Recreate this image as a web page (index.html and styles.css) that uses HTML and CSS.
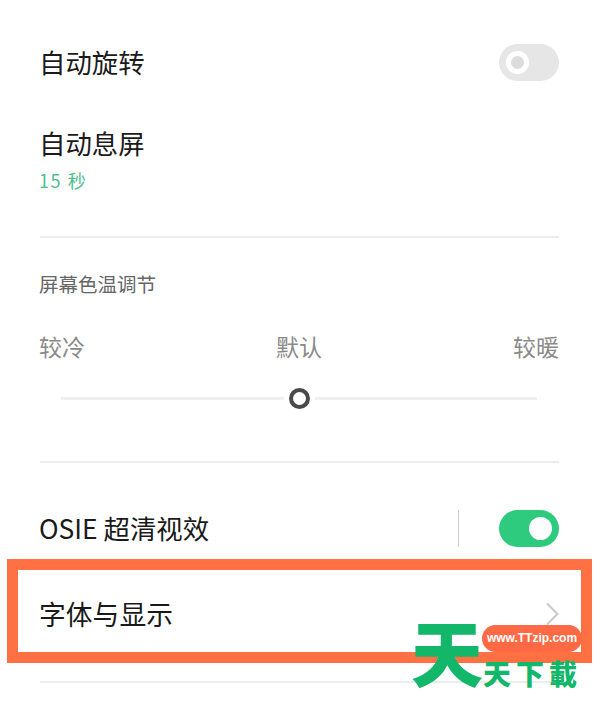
FILE: index.html
```html
<!DOCTYPE html>
<html>
<head>
    <title>字体与显示</title>
    <link rel="stylesheet" href="styles.css">
</head>
<body>
    <div class="page">
        <div class="row row-rotate">
            <span class="row-label">自动旋转</span>
            <span class="switch switch-off"><span class="knob"></span></span>
        </div>

        <div class="row-sleep">
            <div class="row-label">自动息屏</div>
            <div class="row-value">15 秒</div>
        </div>

        <hr class="divider">

        <div class="section-title">屏幕色温调节</div>
        <div class="temp-labels">
            <span>较冷</span>
            <span>默认</span>
            <span>较暖</span>
        </div>
        <div class="slider">
            <span class="slider-thumb"></span>
        </div>

        <hr class="divider">

        <div class="row row-osie">
            <span class="row-label">OSIE 超清视效</span>
            <div class="row-end">
                <span class="row-sep"></span>
                <span class="switch switch-on"><span class="knob"></span></span>
            </div>
        </div>

        <div class="row row-font">
            <span class="row-label row-label-wide">字体与显示</span>
            <svg class="chevron" width="14" height="24" viewBox="0 0 14 24">
                <path d="M2 1.5 L12.5 12 L2 22.5" fill="none" stroke="#c9c9c9" stroke-width="2"/>
            </svg>
        </div>

        <hr class="divider">
    </div>

    <div class="highlight"></div>

    <div class="watermark">
        <span class="wm-big">天</span>
        <span class="wm-url">www.TTzip.com</span>
        <div class="wm-name">
            <span>天</span>
            <span>下</span>
            <span>載</span>
        </div>
    </div>
</body>
</html>
```

FILE: styles.css
```css
html, body {
    margin: 0;
    height: 710px;
    overflow: hidden;
    background-color: #fff;
}

body {
    position: relative;
    font-family: "Noto Sans CJK SC", "Liberation Sans", sans-serif;
    color: #1a1a1a;
}

.page {
    padding: 22px 42px 0 39px;
}

.row {
    display: flex;
    align-items: center;
    justify-content: space-between;
}

.row-label {
    font-size: 26.4px;
    line-height: 38px;
}

.row-label-wide {
    font-size: 26.8px;
}

.row-rotate {
    height: 80px;
}

.row-sleep {
    height: 134px;
    padding-top: 22px;
    box-sizing: border-box;
}

.row-value {
    font-size: 18px;
    line-height: 26px;
    margin-top: 5px;
    letter-spacing: 1.6px;
    color: #4fc08d;
}

.divider {
    height: 2px;
    margin: 0 0 0 1px;
    border: none;
    background-color: #ececec;
}

.section-title {
    margin-top: 32px;
    font-size: 19.5px;
    line-height: 28px;
    color: #666;
}

.temp-labels {
    display: flex;
    justify-content: space-between;
    margin-top: 31px;
    font-size: 23px;
    line-height: 34px;
    color: #8a8a8a;
}

.slider {
    position: relative;
    height: 3px;
    margin: 34px 22px 0 22px;
    background-color: #f0f0f0;
}

.slider-thumb {
    position: absolute;
    left: 228px;
    top: -9px;
    width: 13px;
    height: 13px;
    border: 4px solid #4a4a4a;
    border-radius: 50%;
    background-color: #fff;
    box-shadow: 0 0 0 5px #fff;
}

.slider + .divider {
    margin-top: 61px;
}

.row-osie {
    height: 130px;
}

.row-end {
    display: flex;
    align-items: center;
    gap: 40px;
}

.row-sep {
    width: 1px;
    height: 37px;
    background-color: #ccc;
}

.switch {
    position: relative;
    display: block;
    width: 60px;
    height: 37px;
    border-radius: 19px;
}

.switch-off {
    background-color: #e6e6e6;
}

.switch-on {
    background-color: #2ecb7f;
}

.knob {
    position: absolute;
    top: 7px;
    box-sizing: border-box;
    width: 23px;
    height: 23px;
    border-radius: 50%;
    background-color: #fff;
}

.switch-off .knob {
    left: 7px;
    border: 5px solid #fff;
    background-color: #dcdcdc;
}

.switch-on .knob {
    right: 7px;
}

.row-font {
    height: 84px;
    margin-top: -21px;
}

.row-font + .divider {
    margin-top: 25px;
}

.highlight {
    position: absolute;
    left: 7px;
    top: 559px;
    width: 563px;
    height: 82px;
    border: 11px solid #ff7043;
}

.watermark {
    position: absolute;
    left: 414px;
    top: 620px;
    width: 170px;
    height: 72px;
}

.wm-big {
    position: absolute;
    left: -3px;
    top: -20px;
    font-size: 72px;
    line-height: 100px;
    font-weight: 900;
    color: #12b76a;
}

.wm-url {
    position: absolute;
    left: 68px;
    top: 5px;
    width: 100px;
    height: 27px;
    border-radius: 14px;
    background-color: #ff6a45;
    color: #fff;
    font-family: "Liberation Sans", sans-serif;
    font-size: 12px;
    font-weight: bold;
    line-height: 27px;
    text-align: center;
}

.wm-name {
    position: absolute;
    left: 69px;
    top: 36px;
    display: flex;
    gap: 5px;
    font-size: 28px;
    line-height: 34px;
    font-weight: 900;
    color: #12b76a;
}
```
